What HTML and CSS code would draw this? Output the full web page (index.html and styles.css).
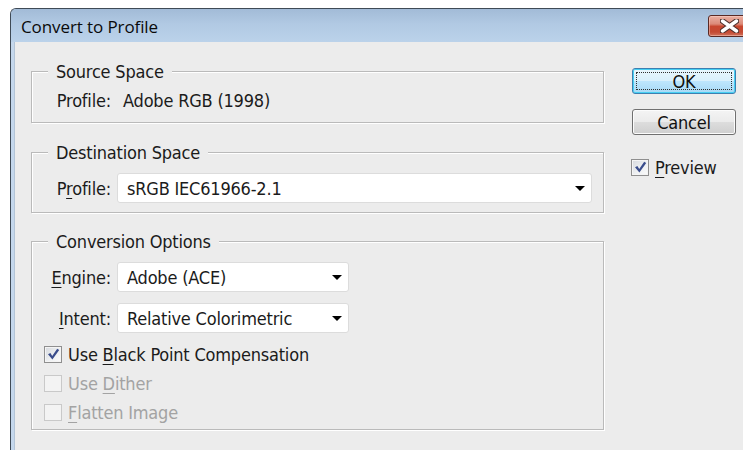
FILE: index.html
```html
<!DOCTYPE html>
<html lang="en">
<head>
<meta charset="utf-8">
<title>Convert to Profile</title>
<link rel="stylesheet" href="styles.css">
</head>
<body>
<div class="window">
  <div class="titlebar">
    <span class="title">Convert to Profile</span>
    <button class="close" aria-label="Close">
      <svg width="19" height="14" viewBox="0 0 19 14">
        <path d="M2.5 2 L16.5 12 M16.5 2 L2.5 12" stroke="#4d2f2b" stroke-width="5.6" stroke-linecap="round"/>
        <path d="M2.5 2 L16.5 12 M16.5 2 L2.5 12" stroke="#ffffff" stroke-width="3.4" stroke-linecap="round"/>
      </svg>
    </button>
  </div>
  <div class="client">
    <div class="main">
      <fieldset class="group group-source">
        <legend>Source Space</legend>
        <div class="row text-row">
          <span class="label">Profile:</span>
          <span class="value">Adobe RGB (1998)</span>
        </div>
      </fieldset>

      <fieldset class="group group-dest">
        <legend>Destination Space</legend>
        <div class="row">
          <span class="label">P<u>r</u>ofile:</span>
          <div class="select select-wide">
            <span>sRGB IEC61966-2.1</span>
            <svg class="arrow" width="10" height="5" viewBox="0 0 10 5"><path d="M0 0 H10 L5 5 Z" fill="#000"/></svg>
          </div>
        </div>
      </fieldset>

      <fieldset class="group group-options">
        <legend>Conversion Options</legend>
        <div class="row">
          <span class="label"><u>E</u>ngine:</span>
          <div class="select select-narrow">
            <span>Adobe (ACE)</span>
            <svg class="arrow" width="10" height="5" viewBox="0 0 10 5"><path d="M0 0 H10 L5 5 Z" fill="#000"/></svg>
          </div>
        </div>
        <div class="row row-gap">
          <span class="label"><u>I</u>ntent:</span>
          <div class="select select-narrow">
            <span>Relative Colorimetric</span>
            <svg class="arrow" width="10" height="5" viewBox="0 0 10 5"><path d="M0 0 H10 L5 5 Z" fill="#000"/></svg>
          </div>
        </div>
        <ul class="checks">
          <li class="check-row">
            <span class="box checked">
              <svg width="13" height="13" viewBox="0 0 13 13"><path d="M1 6.2 L3.4 5 L5.2 8 L10.2 0.8 L12.2 2 L5.4 11.6 Z" fill="#3a4d8c"/></svg>
            </span>
            <span>Use <u>B</u>lack Point Compensation</span>
          </li>
          <li class="check-row disabled">
            <span class="box"></span>
            <span>Use <u>D</u>ither</span>
          </li>
          <li class="check-row disabled">
            <span class="box"></span>
            <span><u>F</u>latten Image</span>
          </li>
        </ul>
      </fieldset>
    </div>

    <div class="side">
      <button class="btn btn-default"><span class="focus">OK</span></button>
      <button class="btn">Cancel</button>
      <div class="check-row preview">
        <span class="box checked">
          <svg width="13" height="13" viewBox="0 0 13 13"><path d="M1 6.2 L3.4 5 L5.2 8 L10.2 0.8 L12.2 2 L5.4 11.6 Z" fill="#3a4d8c"/></svg>
        </span>
        <span><u>P</u>review</span>
      </div>
    </div>
  </div>
</div>
</body>
</html>
```

FILE: styles.css
```css
* {
  box-sizing: border-box;
}

html,
body {
  margin: 0;
  height: 100%;
  overflow: hidden;
  background: #ffffff;
}

body {
  padding: 8px 0 0 10px;
  font-family: "DejaVu Sans Condensed", "DejaVu Sans", sans-serif;
  font-size: 18px;
  letter-spacing: -0.2px;
  color: #1b1b1b;
}

u {
  text-decoration-thickness: 1px;
  text-underline-offset: 3px;
}

/* window frame */
.window {
  width: 747px;
  height: 460px;
  border: 1px solid #3f4a56;
  border-right: none;
  border-bottom: none;
  border-radius: 6px 0 0 0;
  background: #c4d7ec;
  display: flex;
  flex-direction: column;
}

.titlebar {
  height: 33px;
  flex: none;
  display: flex;
  align-items: flex-start;
  padding-left: 10px;
  border-radius: 5px 0 0 0;
  background: linear-gradient(180deg, #a2bbd7 0%, #b1c9e3 45%, #bbd2ea 100%);
}

.title {
  font-family: "Open Sans", "Noto Sans", sans-serif;
  font-size: 17px;
  line-height: 33px;
  padding-top: 1px;
  color: #0a0a0a;
  letter-spacing: -0.1px;
}

.close {
  margin: 6px 6px 0 auto;
  width: 43px;
  height: 22px;
  padding: 0;
  border: 1px solid #5a2a25;
  border-radius: 3px;
  background: linear-gradient(180deg, #eab0a3 0%, #dc8a78 40%, #c8472f 52%, #c44a33 80%, #d0725c 100%);
  box-shadow: inset 0 0 0 1px rgba(255, 220, 210, 0.45);
  display: flex;
  align-items: center;
  justify-content: center;
}

.client {
  flex: 1;
  margin-left: 3px;
  background: #ececec;
  border-left: 1px solid #b3c4d6;
  display: flex;
  align-items: flex-start;
}

.main {
  padding: 20px 0 0 16px;
  display: flex;
  flex-direction: column;
}

/* etched group boxes */
.group {
  width: 573px;
  margin: 0;
  min-width: 0;
  border: 1px solid #bababa;
  box-shadow: 1px 1px 0 #ffffff, inset 1px 1px 0 #ffffff;
  padding: 0 0 0 12px;
}

.group legend {
  margin-left: 4px;
  padding: 0 8px;
  line-height: 19px;
  background: #ececec;
}

.group-source {
  padding-top: 10px;
  padding-bottom: 13px;
}

.group-dest {
  margin-top: 20px;
  padding-top: 11px;
  padding-bottom: 9px;
}

.group-options {
  margin-top: 19px;
  padding-top: 11px;
  padding-bottom: 2px;
}

.row {
  display: flex;
  align-items: center;
  height: 30px;
}

.text-row {
  height: 18px;
}

.row-gap {
  margin-top: 11px;
}

.label {
  width: 67px;
  text-align: right;
  flex: none;
}

.value {
  margin-left: 12px;
}

.select {
  margin-left: 6px;
  height: 30px;
  background: #ffffff;
  border: 1px solid #dcdcdc;
  border-radius: 3px;
  display: flex;
  align-items: center;
  justify-content: space-between;
  padding: 0 6px 0 9px;
}

.select-wide {
  width: 475px;
}

.select-narrow {
  width: 232px;
}

.arrow {
  flex: none;
  margin-top: 1px;
}

/* checkboxes */
.checks {
  list-style: none;
  margin: 7px 0 0;
  padding: 0;
}

.check-row {
  display: flex;
  align-items: center;
  height: 29px;
  gap: 6px;
}

.box {
  width: 18px;
  height: 17px;
  flex: none;
  border: 1px solid #8f8f8f;
  background: linear-gradient(135deg, #d6d9de 0%, #eef0f2 55%, #fbfbfb 100%);
  box-shadow: inset 0 0 0 1px #f4f4f4;
  display: flex;
  align-items: center;
  justify-content: center;
}

.disabled {
  color: #a3a3a3;
}

.disabled .box {
  border-color: #c9c9c9;
  background: #f3f3f3;
  box-shadow: none;
}

/* side column */
.side {
  margin-left: 28px;
  padding-top: 26px;
  display: flex;
  flex-direction: column;
  align-items: flex-start;
}

.btn {
  width: 104px;
  height: 26px;
  padding: 0;
  font: inherit;
  letter-spacing: inherit;
  color: #111111;
  border: 1px solid #707070;
  border-radius: 3px;
  background: linear-gradient(180deg, #f4f4f4 0%, #ebebeb 49%, #dddddd 50%, #cfcfcf 100%);
  box-shadow: inset 0 0 0 1px #fcfcfc;
  display: flex;
  align-items: center;
  justify-content: center;
}

.btn + .btn {
  margin-top: 15px;
}

.btn-default {
  border-color: #3c7fb1;
  background: linear-gradient(180deg, #eaf6fd 0%, #d9f0fc 49%, #bee6fd 50%, #a7d9f5 100%);
  box-shadow: inset 0 0 0 1px #48d0f3;
  padding: 3px;
}

.btn-default .focus {
  width: 100%;
  height: 100%;
  border: 1px dotted #303030;
  display: flex;
  align-items: center;
  justify-content: center;
}

.preview {
  margin-top: 18px;
  margin-left: -1px;
}
```
